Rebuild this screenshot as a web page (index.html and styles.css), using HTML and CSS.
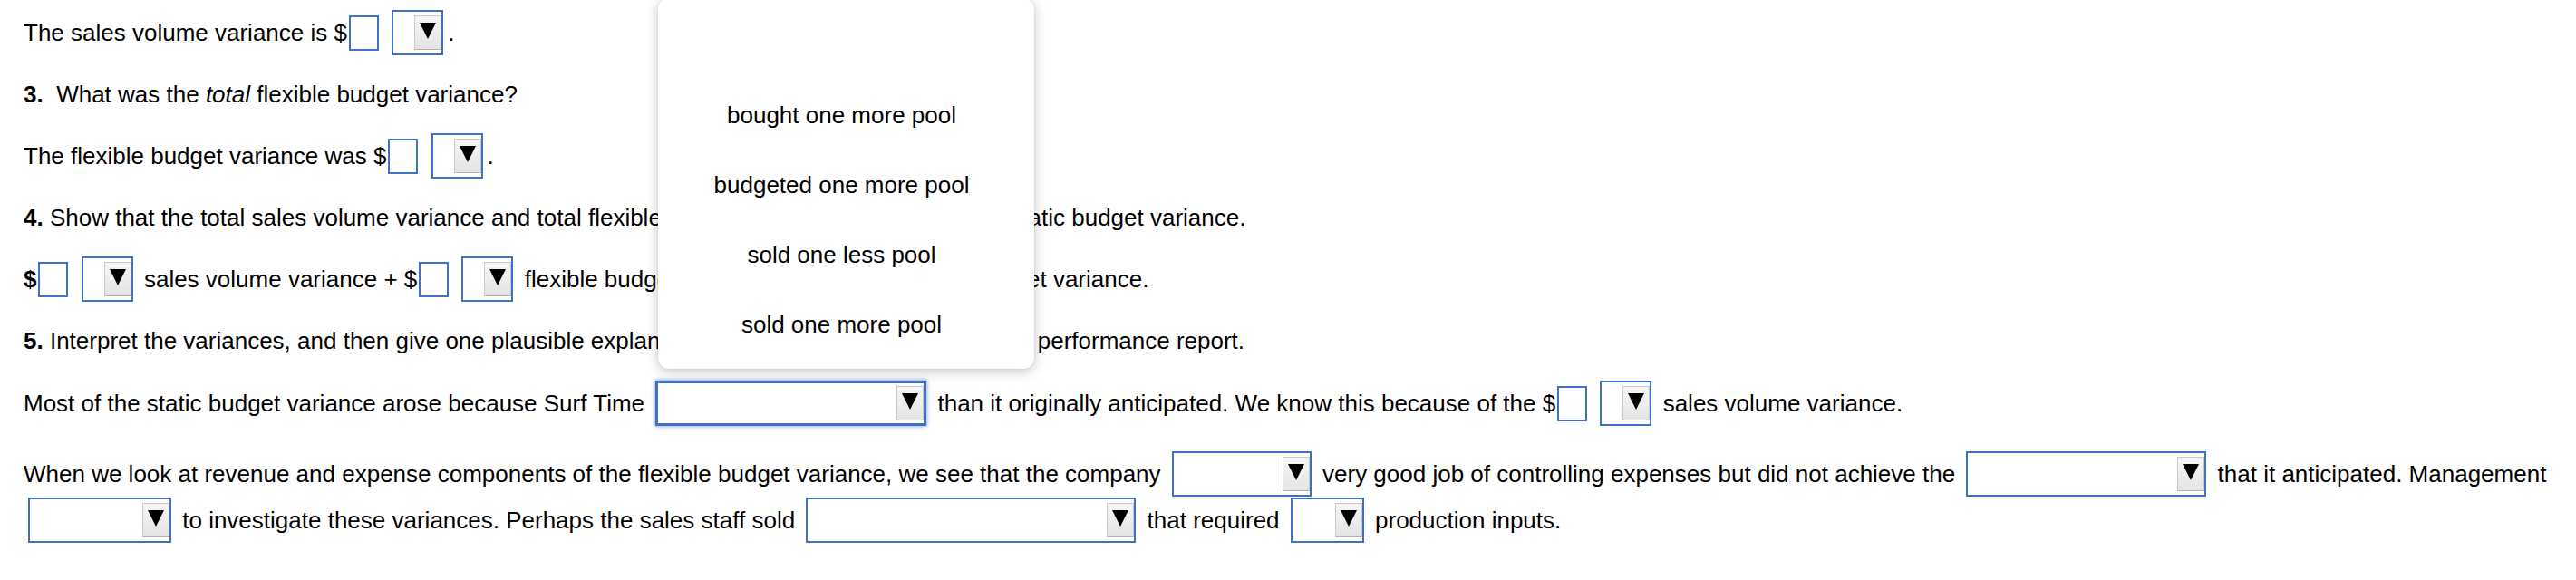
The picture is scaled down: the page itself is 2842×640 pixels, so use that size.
FILE: index.html
```html
<!DOCTYPE html>
<html lang="en">
<head>
<meta charset="utf-8">
<title>Surf Time variances</title>
<link rel="stylesheet" href="styles.css">
</head>
<body>
<div class="page">
  <p class="q">The sales volume variance is $<input class="num" type="text" aria-label="amount"> <span class="dd dd-xs" role="combobox"><span class="dd-btn"></span></span>.</p>
  <p class="q"><b>3.</b>&nbsp; What was the <i>total</i> flexible budget variance?</p>
  <p class="q">The flexible budget variance was $<input class="num" type="text" aria-label="amount"> <span class="dd dd-xs" role="combobox"><span class="dd-btn"></span></span>.</p>
  <p class="q"><b>4.</b> Show that the total sales volume variance and total flexible budget variance sum to the total static budget variance.</p>
  <p class="q"><b>$</b><input class="num" type="text" aria-label="amount"> <span class="dd dd-xs" role="combobox"><span class="dd-btn"></span></span> sales volume variance + $<input class="num" type="text" aria-label="amount"> <span class="dd dd-xs" role="combobox"><span class="dd-btn"></span></span> flexible budget variance= $<input class="num" type="text" aria-label="amount"> <span class="dd dd-xs" role="combobox"><span class="dd-btn"></span></span> static budget variance.</p>
  <p class="q"><b>5.</b> Interpret the variances, and then give one plausible explanation for the variances shown in the performance report.</p>
  <p class="q q-wide">Most of the static budget variance arose because Surf Time <span class="dd dd-xl is-open" role="combobox"><span class="dd-btn"></span></span> than it originally anticipated. We know this because of the $<input class="num" type="text" aria-label="amount"> <span class="dd dd-xs" role="combobox"><span class="dd-btn"></span></span> sales volume variance.</p>
  <p class="q">When we look at revenue and expense components of the flexible budget variance, we see that the company <span class="dd dd-m" role="combobox"><span class="dd-btn"></span></span> very good job of controlling expenses but did not achieve the <span class="dd dd-l" role="combobox"><span class="dd-btn"></span></span> that it anticipated. Management<br><span class="dd dd-m2" role="combobox"><span class="dd-btn"></span></span> to investigate these variances. Perhaps the sales staff sold <span class="dd dd-xxl" role="combobox"><span class="dd-btn"></span></span> that required <span class="dd dd-s" role="combobox"><span class="dd-btn"></span></span> production inputs.</p>

  <ul class="menu" role="listbox">
    <li class="menu-item"></li>
    <li class="menu-item">bought one more pool</li>
    <li class="menu-item">budgeted one more pool</li>
    <li class="menu-item">sold one less pool</li>
    <li class="menu-item">sold one more pool</li>
  </ul>
</div>
</body>
</html>
```

FILE: styles.css
```css
html, body {
  margin: 0;
  padding: 0;
  background: #ffffff;
}

.page {
  position: relative;
  padding: 10.5px 26px 0;
  font-family: "Liberation Sans", Arial, sans-serif;
  font-size: 26px;
  line-height: 51px;
  color: #000;
}

.q {
  margin: 0 0 17.2px;
  white-space: nowrap;
}

.q-wide {
  margin-bottom: 27px;
}

.q b {
  font-weight: bold;
}

.num {
  box-sizing: border-box;
  width: 33px;
  height: 39px;
  margin: 0 2px;
  padding: 0;
  border: 2px solid #4270c7;
  border-radius: 0;
  background: #fff;
  font: inherit;
  line-height: normal;
  vertical-align: baseline;
  outline: none;
}

.dd {
  display: inline-block;
  box-sizing: border-box;
  height: 50px;
  margin: 0 5px;
  padding: 4px 0;
  border: 2px solid #4270c7;
  background: #fff;
  overflow: hidden;
  vertical-align: -16px;
}

.dd-xs { width: 57px; }
.dd-s { width: 81px; }
.dd-m { width: 154px; }
.dd-m2 { width: 158px; }
.dd-l { width: 265px; }
.dd-xl { width: 299px; }
.dd-xxl { width: 364px; }

.dd.is-open {
  border-width: 3px;
  padding: 3px 0;
  box-shadow: 0 0 4px 1px rgba(66, 112, 199, 0.55);
}

.dd-btn {
  display: block;
  box-sizing: border-box;
  width: 30px;
  height: 38px;
  margin-left: auto;
  border: 1px solid #c9c9c9;
  border-bottom-color: #b4b4b4;
  background: linear-gradient(#f6f6f6, #e4e4e4);
}

.dd-btn::before {
  content: "";
  display: block;
  width: 0;
  height: 0;
  margin: 7px auto 0;
  border-left: 9px solid transparent;
  border-right: 9px solid transparent;
  border-top: 18px solid #000;
}

.menu {
  position: absolute;
  left: 726px;
  top: -2px;
  width: 415px;
  height: 409px;
  box-sizing: border-box;
  margin: 0;
  padding: 13px 0 11px;
  list-style: none;
  background: #fff;
  border-radius: 12px;
  box-shadow: 0 3px 14px rgba(0, 0, 0, 0.22), 0 0 2px rgba(0, 0, 0, 0.12);
  display: flex;
  flex-direction: column;
}

.menu-item {
  height: 77px;
  display: flex;
  align-items: center;
  justify-content: center;
  font-size: 26px;
  line-height: 1;
  padding-right: 10px;
}
```
